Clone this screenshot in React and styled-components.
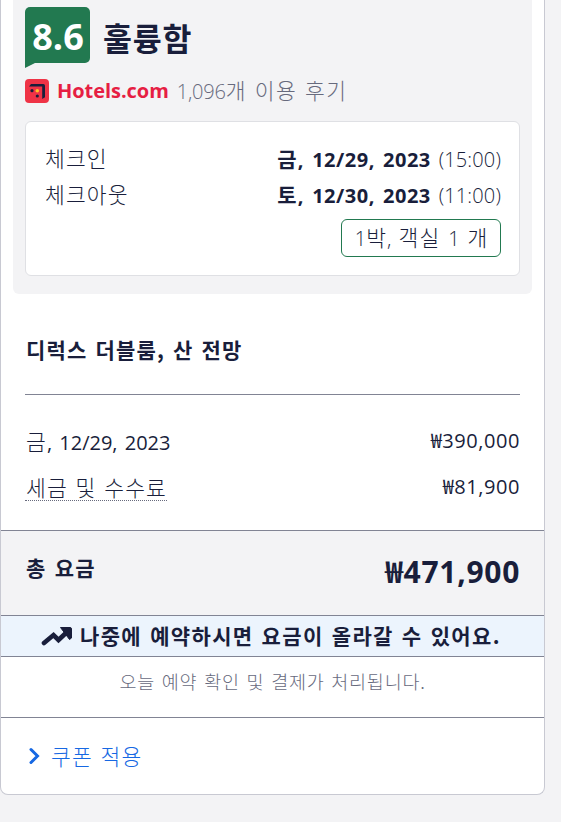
import React from 'react';
import styled, { createGlobalStyle } from 'styled-components';

const GlobalStyle = createGlobalStyle`
  * {
    box-sizing: border-box;
  }
  body {
    margin: 0;
    background: #f3f3f5;
    color: #191e3b;
    font-family: 'Open Sans', 'Noto Sans CJK KR', sans-serif;
    font-size: 20px;
  }
`

const Card = styled.main`
  width: 545px;
  height: 795px;
  background: white;
  border: 1px solid #c8c9d2;
  border-top: 0;
  border-radius: 0 0 8px 8px;
  overflow: hidden;
`

const Summary = styled.section`
  height: 294px;
  margin: 0 12px;
  padding: 7px 12px 18px;
  background: #f3f3f5;
  border-radius: 0 0 6px 6px;
`

const Line = styled.div`
  display: flex;
  align-items: center;
  justify-content: space-between;
  height: ${props => props.$height}px;
`

const Text = styled.span`
  display: block;
  white-space: pre;
  line-height: ${props => props.$line || 30}px;
`

// Hangul is set a little larger than the figures beside it
const Ko = styled.span`
  font-family: 'Noto Sans CJK KR', sans-serif;
  font-size: ${props => props.$size || 21.5}px;
  font-weight: ${props => props.$weight || 300};
  letter-spacing: ${props => props.$spacing || 1.1}px;
  word-spacing: ${props => props.$word || 2}px;
`

const Num = styled.span`
  font-size: ${props => props.$size || 20}px;
  font-weight: ${props => props.$weight || 400};
  letter-spacing: ${props => props.$spacing || 0}px;
  word-spacing: ${props => props.$word || 0}px;
`

const Rating = styled.div`
  display: flex;
  align-items: flex-start;
  gap: 13px;
  height: 62px;
`

const Score = styled.div`
  position: relative;
  width: 65px;
  height: 56px;
  padding-left: 1px;
  border-radius: 5px 5px 5px 0;
  background: #227950;
  color: white;
  font-size: 36px;
  font-weight: 700;
  line-height: 60px;
  text-align: center;
  &::after {
    content: '';
    position: absolute;
    left: 0;
    top: 55px;
    border-top: 6px solid #227950;
    border-right: 12px solid transparent;
  }
`

const Reviews = styled.div`
  display: flex;
  align-items: center;
  height: 30px;
  margin-top: 7px;
  color: #676a7d;
`

const Brand = styled.span`
  margin: 0 8px;
  color: #e61e43;
  font-weight: 700;
  letter-spacing: -0.05px;
  line-height: 30px;
`

const Stay = styled.div`
  height: 155px;
  margin-top: 15px;
  padding: 19px 18px 0 19px;
  background: white;
  border: 1px solid #dfe0e4;
  border-radius: 6px;
`

const Nights = styled.div`
  display: flex;
  align-items: center;
  justify-content: center;
  width: 160px;
  height: 38px;
  margin: 6px 0 0 auto;
  padding-left: 1px;
  border: 1px solid #227950;
  border-radius: 6px;
`

const Room = styled.h2`
  height: 101px;
  margin: 0 24px;
  padding: 40px 0 0 1px;
  border-bottom: 1px solid #818494;
  font-size: inherit;
`

const Prices = styled.section`
  height: 136px;
  padding: 23px 24px 0;
  border-bottom: 1px solid #818494;
`

const Label = styled(Text)`
  height: 31px;
  padding-left: 1px;
`

const Underlined = styled(Label)`
  height: 28px;
  line-height: 27px;
  border-bottom: 1px dotted #676a7d;
`

const Total = styled.section`
  display: flex;
  justify-content: space-between;
  height: 85px;
  padding: 22px 24px 0 25px;
  background: #f3f3f5;
  border-bottom: 1px solid #818494;
`

const Notice = styled.section`
  display: flex;
  align-items: center;
  gap: 7px;
  height: 41px;
  padding-left: 40px;
  background: #ecf4fd;
  border-bottom: 1px solid #818494;
`

const Confirmation = styled.section`
  display: flex;
  justify-content: center;
  height: 61px;
  padding-top: 9px;
  color: #676a7d;
  border-bottom: 1px solid #818494;
`

const Coupon = styled.a`
  display: flex;
  align-items: center;
  gap: 11px;
  height: 76px;
  padding-left: 26px;
  color: #1668e3;
`

const HotelsIcon = () => (
  <svg width="24" height="24" viewBox="0 0 24 24">
    <rect width="24" height="24" rx="4" fill="#ef3346" />
    <path d="M6 5H18.3Q20 5 20 6.7V18.2L17.2 20V7.6H4Z" fill="#191e3b" />
    <circle cx="7" cy="11.7" r="1.6" fill="#191e3b" />
    <circle cx="12.3" cy="11.7" r="1.8" fill="#ffbf27" />
    <circle cx="12.3" cy="17" r="1.6" fill="#191e3b" />
  </svg>
)

const TrendIcon = () => (
  <svg width="32" height="20" viewBox="0 0 32 20">
    <path d="M3 17L12.5 9L17.5 14L26 6" fill="none" stroke="#191e3b" strokeWidth="4.6" strokeLinecap="round" />
    <path d="M19.5 1.5H29Q30.5 1.5 30.5 3V12L28.5 13.5Z" fill="#191e3b" stroke="#191e3b" strokeLinejoin="round" />
  </svg>
)

const ChevronIcon = () => (
  <svg width="13" height="18" viewBox="0 0 13 18">
    <path d="M4 2.5L10.5 9L4 15.5" fill="none" stroke="#1668e3" strokeWidth="3" strokeLinecap="round" />
  </svg>
)

const StayRow = ({ label, day, date, time }) => (
  <Line $height={36}>
    <Text><Ko>{label}</Ko></Text>
    <Text $line={29}>
      <Ko $weight={700} $size={21}>{day}</Ko>
      <Num $weight={700} $word={2.5} $spacing={0.5}>{date}</Num>
      <Num $weight={350} $word={2.5} $spacing={0.15}>{time}</Num>
    </Text>
  </Line>
)

const App = () => (
  <>
    <GlobalStyle />
    <Card>
      <Summary>
        <Rating>
          <Score>8.6</Score>
          <Text $line={60}><Ko $size={31.5} $weight={700} $spacing={0.8}>훌륭함</Ko></Text>
        </Rating>
        <Reviews>
          <HotelsIcon />
          <Brand>Hotels.com</Brand>
          <Text $line={28}><Num $weight={350} $spacing={-0.2}>1,096</Num><Ko $spacing={1.3}>개 이용 후기</Ko></Text>
        </Reviews>
        <Stay>
          <StayRow label="체크인" day="금" date=", 12/29, 2023" time=" (15:00)" />
          <StayRow label="체크아웃" day="토" date=", 12/30, 2023" time=" (11:00)" />
          <Nights>
            <Text><Num $weight={350}>1</Num><Ko>박</Ko><Num $weight={350} $word={2}>, </Num><Ko>객실 </Ko><Num $weight={350}>1</Num><Ko> 개</Ko></Text>
          </Nights>
        </Stay>
      </Summary>
      <Room>
        <Text><Ko $weight={700} $size={21} $spacing={1.2}>디럭스 더블룸, 산 전망</Ko></Text>
      </Room>
      <Prices>
        <Line $height={46}>
          <Label><Ko>금</Ko><Num $word={2}>, 12/29, 2023</Num></Label>
          <Text><Num $spacing={0.55}>₩390,000</Num></Text>
        </Line>
        <Line $height={46}>
          <Underlined><Ko>세금 및 수수료</Ko></Underlined>
          <Text><Num $spacing={0.55}>₩81,900</Num></Text>
        </Line>
      </Prices>
      <Total>
        <Text $line={29}><Ko $weight={700} $size={21} $spacing={1.3}>총 요금</Ko></Text>
        <Text $line={38}><Num $size={30} $weight={700} $spacing={0.7}>₩471,900</Num></Text>
      </Total>
      <Notice>
        <TrendIcon />
        <Text><Ko $weight={700} $size={21} $spacing={1.35}>나중에 예약하시면 요금이 올라갈 수 있어요.</Ko></Text>
      </Notice>
      <Confirmation>
        <Text><Ko $size={18.5} $spacing={0.75}>오늘 예약 확인 및 결제가 처리됩니다.</Ko></Text>
      </Confirmation>
      <Coupon>
        <ChevronIcon />
        <Text $line={29}><Ko>쿠폰 적용</Ko></Text>
      </Coupon>
    </Card>
  </>
)

export default App;
